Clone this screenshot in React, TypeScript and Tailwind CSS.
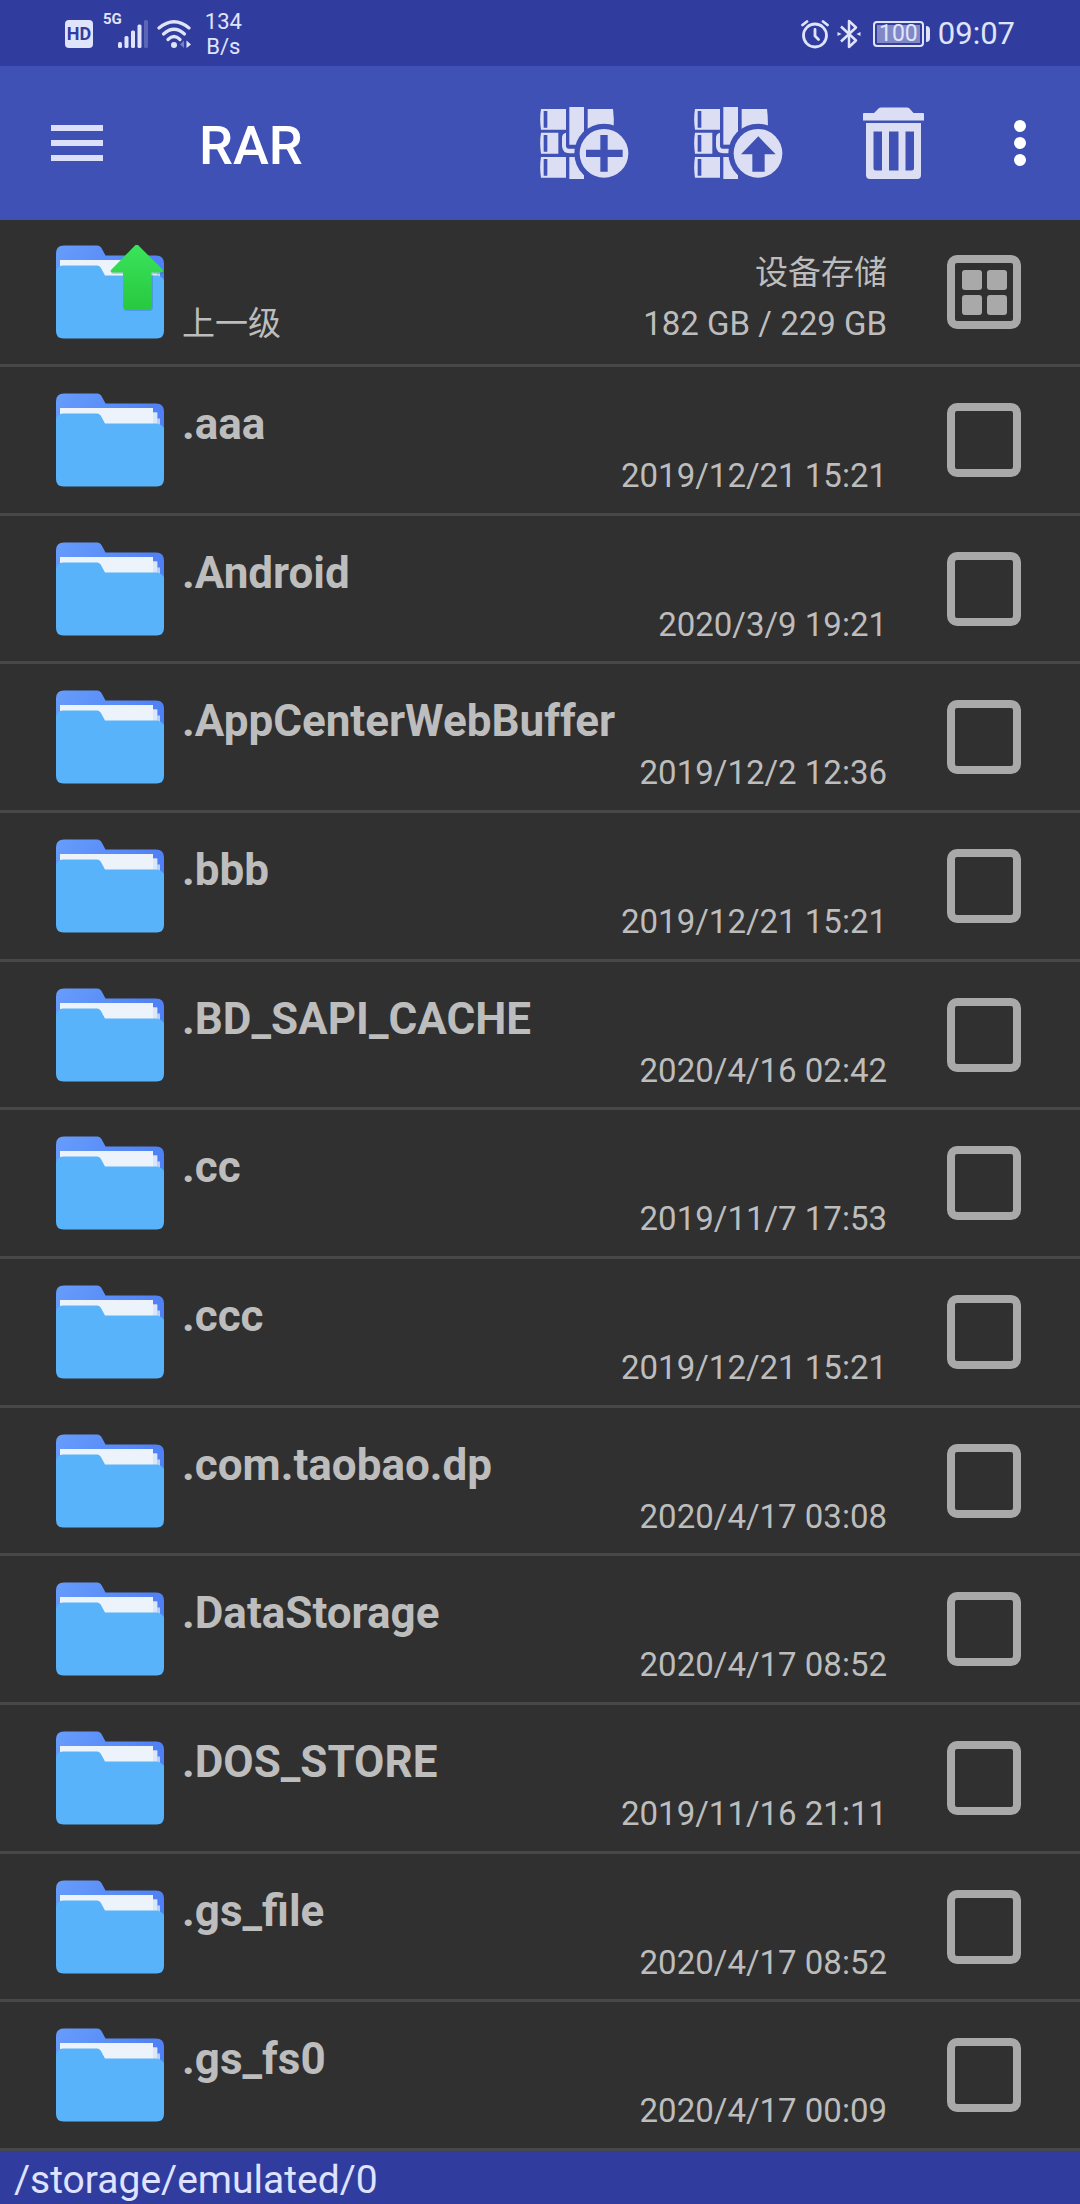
import type { ReactNode } from "react";

type Entry = { name: string; date: string };

const ENTRIES: Entry[] = [
  { name: ".aaa", date: "2019/12/21 15:21" },
  { name: ".Android", date: "2020/3/9 19:21" },
  { name: ".AppCenterWebBuffer", date: "2019/12/2 12:36" },
  { name: ".bbb", date: "2019/12/21 15:21" },
  { name: ".BD_SAPI_CACHE", date: "2020/4/16 02:42" },
  { name: ".cc", date: "2019/11/7 17:53" },
  { name: ".ccc", date: "2019/12/21 15:21" },
  { name: ".com.taobao.dp", date: "2020/4/17 03:08" },
  { name: ".DataStorage", date: "2020/4/17 08:52" },
  { name: ".DOS_STORE", date: "2019/11/16 21:11" },
  { name: ".gs_file", date: "2020/4/17 08:52" },
  { name: ".gs_fs0", date: "2020/4/17 00:09" },
];

/** Signal bars, the last one dimmed. */
function SignalIcon() {
  return (
    <svg viewBox="0 0 31 28" className="w-[31px] h-7" fill="currentColor" aria-hidden="true">
      <rect x="0" y="22" width="4" height="6" rx="1.5" />
      <rect x="6.5" y="16" width="4" height="12" rx="1.5" />
      <rect x="13" y="10.5" width="4" height="17.5" rx="1.5" />
      <rect x="19.5" y="4.5" width="4" height="23.5" rx="1.5" />
      <rect x="26" y="0" width="4" height="28" rx="1.5" opacity="0.25" />
    </svg>
  );
}

function WifiIcon() {
  return (
    <svg viewBox="0 0 36 29" className="w-9 h-[29px]" aria-hidden="true">
      <g fill="none" stroke="currentColor" strokeWidth="3.2" strokeLinecap="round">
        <path d="M2 8 Q17 -4.500 32 8" />
        <path d="M6.500 14 Q17 4.500 27.500 14" />
        <path d="M11 19.500 Q17 13.500 23 19.500" />
      </g>
      <circle cx="17" cy="25" r="3" fill="currentColor" />
      <path d="M27 20.500 L23 24.500 L27 28 Z" fill="currentColor" opacity="0.4" />
      <path d="M29.500 20.500 L34 24.500 L29.500 28 Z" fill="currentColor" />
    </svg>
  );
}

function AlarmIcon() {
  return (
    <svg viewBox="0 0 28 29" className="w-7 h-[29px]" fill="none" stroke="currentColor" strokeWidth="2.8" strokeLinecap="round" aria-hidden="true">
      <circle cx="14" cy="15.500" r="11.500" />
      <path d="M14 9.500 V16 L17.500 19.500" />
      <path d="M1.500 5 L6 1.500 M26.500 5 L22 1.500" />
    </svg>
  );
}

function BluetoothIcon() {
  return (
    <svg viewBox="0 0 24 30" className="w-6 h-[30px]" aria-hidden="true">
      <path d="M4 7.500 L19 21.500 L12 28 V2 L19 8.500 L4 22.500" fill="none" stroke="currentColor" strokeWidth="2.5" strokeLinejoin="round" />
      <path d="M0.500 13 L4.500 15 L0.500 17 Z M23.500 13 L19.500 15 L23.500 17 Z" fill="currentColor" />
    </svg>
  );
}

/** Stack of books held by a belt, with a round badge cut into the corner. */
function ArchiveIcon({ id, children }: { id: string; children: ReactNode }) {
  return (
    <svg viewBox="60 78 267 216" className="w-[89px] h-[72px]" fill="#dcdff4" aria-hidden="true">
      <mask id={id}>
        <rect x="60" y="78" width="267" height="216" fill="white" />
        <circle cx="252" cy="217" r="89" fill="black" />
      </mask>
      <g mask={`url(#${id})`}>
        <path fillRule="evenodd" d="M63 84 H138 V146 H63 Q58 115 63 84 Z M71 90 V140 H82 V90 Z" />
        <path fillRule="evenodd" d="M63 155 H115 V218 H63 Q58 186 63 155 Z M71 162 V212 H82 V162 Z" />
        <path fillRule="evenodd" d="M63 228 H138 V290 H63 Q58 259 63 228 Z M71 234 V284 H82 V234 Z" />
        <path d="M138 155 Q126 158 126 170 V196 Q128 217 148 217 H180 V203 H146 Q138 202 138 194 Z" />
        <path d="M148 78 H192 V191 H148 Z" />
        <path d="M148 228 H192 V294 H148 Z" />
        <path d="M203 84 H279 Q283 115 281 146 H203 Z" />
      </g>
      <circle cx="252" cy="217" r="73" />
      <g fill="#3f51b5">{children}</g>
    </svg>
  );
}

function TrashIcon() {
  return (
    <svg viewBox="0 0 61 72" className="w-[61px] h-[72px]" fill="#dcdff4" aria-hidden="true">
      <path d="M1 6 H11 L15.500 1.500 Q16.500 0.500 18 0.500 H44 Q45.500 0.500 46.500 1.500 L50.500 6 H60 Q61 6 61 7 V13.500 H0 V7 Q0 6 1 6 Z" />
      <path
        fillRule="evenodd"
        d="M3 16 H58 V68 Q58 72 54 72 H7 Q3 72 3 68 Z M10.500 24.500 V61 Q10.500 63.500 13 63.500 H19 V24.500 Z M26 24.500 V63.500 H35.500 V24.500 Z M42.500 24.500 V63.500 H48.500 Q51 63.500 51 61 V24.500 Z"
      />
    </svg>
  );
}

function FolderIcon({ up = false }: { up?: boolean }) {
  return (
    <svg viewBox="0 0 108 94" className="w-[108px] h-[94px] shrink-0" aria-hidden="true">
      <defs>
        <linearGradient id="folder-back" x1="0" y1="0" x2="1" y2="0.3">
          <stop offset="0" stopColor="#679dfb" />
          <stop offset="1" stopColor="#4f80f5" />
        </linearGradient>
        <linearGradient id="arrow-up" x1="0" y1="0" x2="0" y2="1">
          <stop offset="0" stopColor="#3be35c" />
          <stop offset="1" stopColor="#27c93f" />
        </linearGradient>
      </defs>
      <path d="M8 0.500 H41 Q44.500 0.500 46 4 L49.500 10.500 H100 Q108 10.500 108 18.500 V50 H0 V8.500 Q0 0.500 8 0.500 Z" fill="url(#folder-back)" />
      <path d="M90 19.500 H101.500 V25.500 H104 V34 H90 Z" fill="#b9d0fb" />
      <path d="M4 15 H97 V19.500 H101 V34 H4 Z" fill="#d9e6fb" />
      <path d="M4 15 H97 V34 H4 Z" fill="#edf3fa" />
      <path d="M7 20.500 H41 Q44 20.500 45.500 24 L49 30.500 H100 Q105 30.500 108 35 V86 Q108 93.500 100.500 93.500 H7.500 Q0 93.500 0 86 V27 Q1 20.500 7 20.500 Z" fill="#58b3fa" />
      {up && (
        <>
          <path d="M83 1 L107 26 Q109 29 106 29 H97 V62 Q97 66 93 66 H71 Q68 66 68 63 V29 H58 Q54 29 56 26 L80 1 Q81.500 0 83 1 Z" fill="#1d5f9c" opacity="0.25" />
          <path d="M82 0 L107 25 Q108 27.500 105 27.500 H95.500 V61 Q95.500 64.500 92 64.500 H70 Q67 64.500 67 61 V27.500 H57 Q53.500 27.500 55 25 L79.500 0 Q81 -1 82 0 Z" fill="url(#arrow-up)" />
        </>
      )}
    </svg>
  );
}

function StatusBar() {
  return (
    <div className="h-[66px] shrink-0 pt-0.5 bg-[#303d9f] text-[#e0e4fb] flex items-center justify-between pl-[65px] pr-[65px]">
      <div className="flex items-center">
        <span className="w-7 h-7 rounded bg-[#e0e4fb] text-[#303d9f] text-[18px] leading-7 font-bold text-center">HD</span>
        <span className="ml-2.5 -mr-1 self-start text-[15px] leading-5 font-bold">5G</span>
        <SignalIcon />
        <span className="ml-2">
          <WifiIcon />
        </span>
        <span className="ml-3 text-[22px] leading-[25px] text-center">
          134
          <br />
          B/s
        </span>
      </div>
      <div className="flex items-center">
        <AlarmIcon />
        <span className="ml-2">
          <BluetoothIcon />
        </span>
        <span className="ml-3 h-[26px] p-0.5 border-2 border-current rounded flex">
          <span className="px-0.5 bg-[#8088c6] text-[23px] leading-[18px]">100</span>
        </span>
        <span className="ml-0.5 w-1 h-4 rounded-r bg-current" />
        <span className="ml-2 text-[31px] leading-9">09:07</span>
      </div>
    </div>
  );
}

function Toolbar() {
  return (
    <header className="h-[154px] shrink-0 bg-[#3f51b5] flex items-center pl-[51px] pr-[54px]">
      <button type="button" aria-label="Menu" className="flex flex-col gap-[9px]">
        <span className="w-[52px] h-1.5 bg-[#dcdff8]" />
        <span className="w-[52px] h-1.5 bg-[#dcdff8]" />
        <span className="w-[52px] h-1.5 bg-[#dcdff8]" />
      </button>
      <h1 className="ml-24 pt-1.5 text-[54px] leading-[64px] font-medium text-white">RAR</h1>
      <div className="ml-auto flex items-center">
        <button type="button" aria-label="Add to archive">
          <ArchiveIcon id="badge-add">
            <path d="M241 162 H263 V206 H308 V228 H263 V272 H241 V228 H198 V206 H241 Z" />
          </ArchiveIcon>
        </button>
        <button type="button" aria-label="Extract" className="ml-[65px]">
          <ArchiveIcon id="badge-extract">
            <path d="M253 166 L305 220 H272 V272 H235 V220 H201 Z" />
          </ArchiveIcon>
        </button>
        <button type="button" aria-label="Delete" className="ml-20">
          <TrashIcon />
        </button>
        <button type="button" aria-label="More" className="ml-[90px] flex flex-col gap-[5px]">
          <span className="size-3 rounded-full bg-white" />
          <span className="size-3 rounded-full bg-white" />
          <span className="size-3 rounded-full bg-white" />
        </button>
      </div>
    </header>
  );
}

/** Row that leads to the parent folder and shows the free space. */
function ParentRow() {
  return (
    <div className="h-[147px] shrink-0 flex items-center pl-14 pr-[59px] border-b-3 border-[#484848]">
      <FolderIcon up />
      <a href="#up" className="ml-[18px] self-end pb-5 leading-10">
        上一级
      </a>
      <div className="ml-auto self-end pb-5 flex flex-col items-end gap-[11px] leading-10">
        <span>设备存储</span>
        <span>182 GB / 229 GB</span>
      </div>
      <button type="button" aria-label="Select all" className="ml-[60px] size-[74px] rounded-[10px] border-8 border-[#a9a9a9] flex items-center justify-center">
        <span className="grid grid-cols-2 gap-[5px]">
          <span className="size-5 rounded-[3px] bg-[#a9a9a9]" />
          <span className="size-5 rounded-[3px] bg-[#a9a9a9]" />
          <span className="size-5 rounded-[3px] bg-[#a9a9a9]" />
          <span className="size-5 rounded-[3px] bg-[#a9a9a9]" />
        </span>
      </button>
    </div>
  );
}

function EntryRow({ entry }: { entry: Entry }) {
  return (
    <li className="flex-1 flex items-center pl-14 pr-[59px] border-b-3 border-[#484848]">
      <FolderIcon />
      <label htmlFor={entry.name} className="ml-[18px] flex-1 self-stretch pt-[31px] flex flex-col gap-1.5">
        <span className="text-[44px] leading-[52px] font-bold">{entry.name}</span>
        <span className="self-end leading-10">{entry.date}</span>
      </label>
      <input
        id={entry.name}
        type="checkbox"
        className="ml-[60px] size-[74px] shrink-0 appearance-none rounded-[10px] border-8 border-[#a9a9a9] checked:bg-[#a9a9a9]"
      />
    </li>
  );
}

export default function App() {
  return (
    <div className="min-h-screen flex flex-col bg-[#303030] font-[Roboto,'Noto_Sans_CJK_SC',sans-serif]">
      <StatusBar />
      <Toolbar />
      <main className="flex-1 flex flex-col text-[33px] text-[#bdbdbd]">
        <ParentRow />
        <ul className="flex-1 flex flex-col">
          {ENTRIES.map((entry) => (
            <EntryRow key={entry.name} entry={entry} />
          ))}
        </ul>
      </main>
      <footer className="h-[53px] shrink-0 pl-[14px] bg-[#303d9f] text-[#dfe3ff] text-[39px] leading-[58px]">/storage/emulated/0</footer>
    </div>
  );
}
